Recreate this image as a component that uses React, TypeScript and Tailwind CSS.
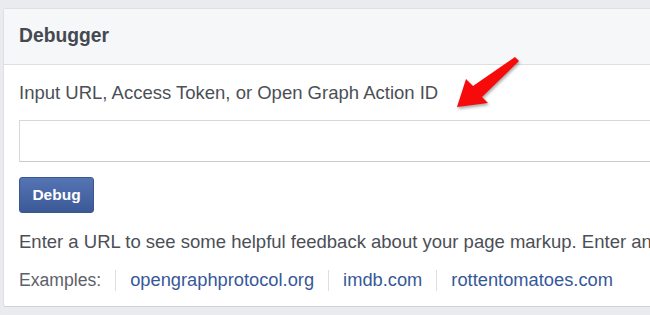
import React from "react";

const examples = ["opengraphprotocol.org", "imdb.com", "rottentomatoes.com"];

function Arrow() {
  return (
    <svg
      className="pointer-events-none absolute left-0 top-0 h-[315px] w-[650px] drop-shadow-[1px_2px_1.5px_rgba(0,0,0,0.35)]"
      viewBox="0 0 650 315"
    >
      <polygon
        points="457,107 466,79 473,86 515,57 519,61 482,97 488,103"
        fill="#f60a0a"
      />
    </svg>
  );
}

export default function App() {
  return (
    <div
      className="relative h-[315px] w-[650px] overflow-hidden bg-[#e9ebee] pl-[3px] pt-[8px]"
      style={{ fontFamily: '"Liberation Sans", Arial, sans-serif' }}
    >
      <div className="w-[720px] rounded-[3px] border border-[#dddfe2] border-b-[#cfd2d7] bg-white">
        <div className="flex h-[56px] items-center border-b border-[#dddfe2] bg-[#f6f7f9] px-[15px]">
          <span className="text-[19.3px] font-bold text-[#444950]">Debugger</span>
        </div>
        <div className="px-[15px] pb-[15px] pt-[17px] text-[18.5px] text-[#4b4f56]">
          <div className="h-[22px] leading-[22px]">Input URL, Access Token, or Open Graph Action ID</div>
          <input
            type="text"
            className="mt-[16px] block h-[42px] w-full border border-[#d6d8dc] border-b-[#c9ccd1] bg-white px-2 outline-none"
          />
          <button
            type="button"
            className="mt-[15px] flex h-[36px] w-[75px] items-center justify-center rounded-[3px] border border-[#3a5690] bg-[linear-gradient(#5574b3,#3c5997)] text-[15.5px] font-bold text-white"
          >
            Debug
          </button>
          <div className="mt-[18px] h-[22px] whitespace-nowrap leading-[22px]">
            Enter a URL to see some helpful feedback about your page markup. Enter an
          </div>
          <div className="mt-[16px] flex h-[22px] items-center whitespace-nowrap">
            <span className="text-[17.6px] text-[#5d6169]">Examples:</span>
            {examples.map((site) => (
              <React.Fragment key={site}>
                <span className="mx-[14px] h-[21px] w-px bg-[#dddfe2]" />
                <a href="#" className="text-[18.3px] text-[#365899]">
                  {site}
                </a>
              </React.Fragment>
            ))}
          </div>
        </div>
      </div>
      <Arrow />
    </div>
  );
}
